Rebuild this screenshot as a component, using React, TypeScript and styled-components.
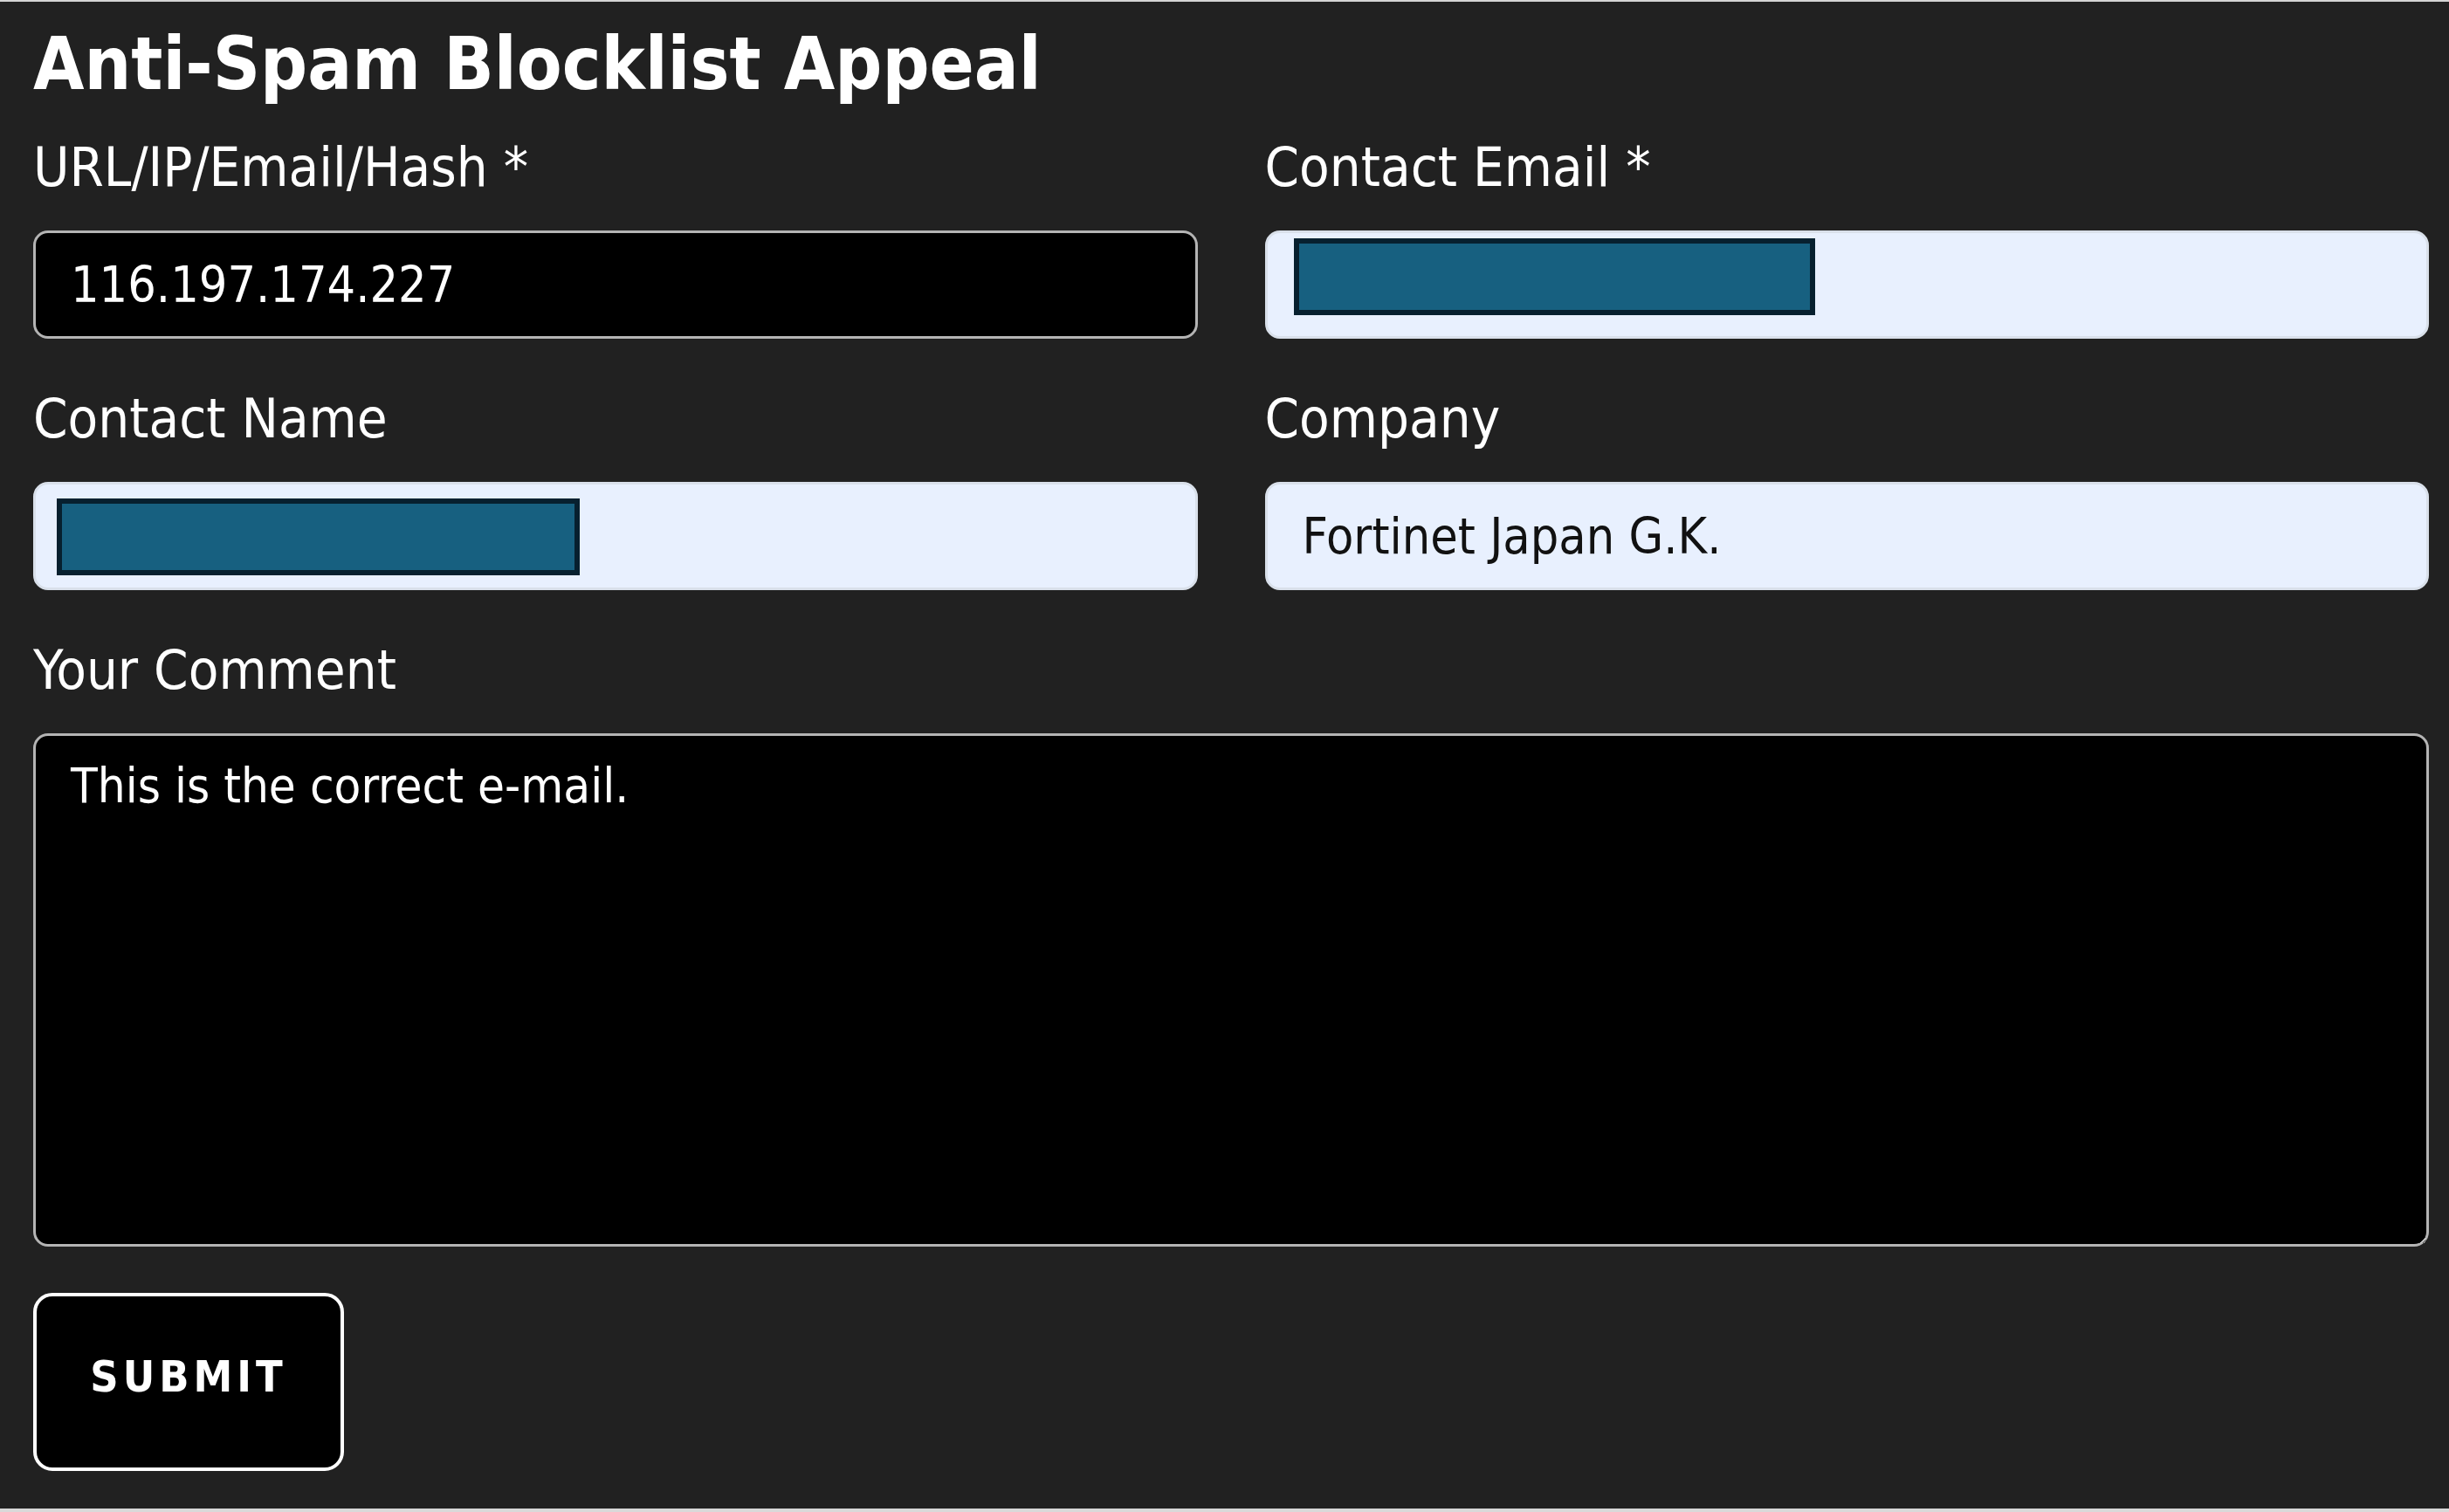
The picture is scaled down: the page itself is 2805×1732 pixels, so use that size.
import styled, { createGlobalStyle } from "styled-components";

const GlobalStyle = createGlobalStyle`
  html, body {
    margin: 0;
    padding: 0;
    background: #212121;
  }
`;

const Page = styled.form`
  box-sizing: border-box;
  min-height: 100vh;
  padding: 28px 23px 40px 38px;
  border-top: 2px solid #d4d4d4;
  border-bottom: 4px solid #d9d9d9;
  background: #212121;
  color: #fff;
  font-family: "DejaVu Sans Condensed", "DejaVu Sans", sans-serif;
  font-stretch: condensed;
`;

const Title = styled.h1`
  margin: 0 0 45px;
  font-size: 84px;
  line-height: 86px;
  font-weight: bold;
`;

const Grid = styled.div`
  display: grid;
  grid-template-columns: 1fr 1fr;
  column-gap: 77px;
  row-gap: 61px;
`;

const Field = styled.div<{ $wide?: boolean }>`
  display: flex;
  flex-direction: column;
  grid-column: ${({ $wide }) => ($wide ? "1 / -1" : "auto")};
`;

const Label = styled.label`
  font-size: 63px;
  line-height: 61px;
  margin-bottom: 42px;
`;

const InputWrap = styled.div`
  position: relative;
`;

const Input = styled.input<{ $autofill?: boolean }>`
  box-sizing: border-box;
  width: 100%;
  height: 124px;
  padding: 0 40px;
  border: 3px solid ${({ $autofill }) => ($autofill ? "#d9e0ea" : "#b4b4b4")};
  border-radius: 17px;
  background: ${({ $autofill }) => ($autofill ? "#e8f0fe" : "#000")};
  color: ${({ $autofill }) => ($autofill ? "#111" : "#fff")};
  font-family: inherit;
  font-stretch: condensed;
  font-size: 57px;
  outline: none;
`;

const Redaction = styled.span<{ $left: number; $top: number; $width: number }>`
  position: absolute;
  left: ${({ $left }) => $left}px;
  top: ${({ $top }) => $top}px;
  width: ${({ $width }) => $width}px;
  height: 88px;
  box-sizing: border-box;
  border: 6px solid #07202f;
  background: #176080;
`;

const Comment = styled.textarea`
  box-sizing: border-box;
  width: 100%;
  height: 588px;
  padding: 23px 40px;
  border: 3px solid #b4b4b4;
  border-radius: 17px;
  background: #000;
  color: #fff;
  color-scheme: dark;
  font-family: inherit;
  font-stretch: condensed;
  font-size: 56px;
  line-height: 1.2;
  outline: none;
`;

const SubmitButton = styled.button`
  display: block;
  margin-top: 53px;
  width: 356px;
  height: 204px;
  padding: 0 0 12px;
  border: 4px solid #fff;
  border-radius: 22px;
  background: #000;
  color: #fff;
  font-family: inherit;
  font-stretch: condensed;
  font-size: 50px;
  font-weight: bold;
  letter-spacing: 5px;
`;

export default function App() {
  return (
    <>
      <GlobalStyle />
      <Page onSubmit={(e) => e.preventDefault()}>
        <Title>Anti-Spam Blocklist Appeal</Title>
        <Grid>
          <Field>
            <Label>URL/IP/Email/Hash *</Label>
            <Input defaultValue="116.197.174.227" />
          </Field>
          <Field>
            <Label>Contact Email *</Label>
            <InputWrap>
              <Input $autofill />
              <Redaction $left={33} $top={9} $width={597} />
            </InputWrap>
          </Field>
          <Field>
            <Label>Contact Name</Label>
            <InputWrap>
              <Input $autofill />
              <Redaction $left={27} $top={19} $width={599} />
            </InputWrap>
          </Field>
          <Field>
            <Label>Company</Label>
            <Input $autofill defaultValue="Fortinet Japan G.K." />
          </Field>
          <Field $wide>
            <Label>Your Comment</Label>
            <Comment defaultValue="This is the correct e-mail." />
          </Field>
        </Grid>
        <SubmitButton type="submit">SUBMIT</SubmitButton>
      </Page>
    </>
  );
}
